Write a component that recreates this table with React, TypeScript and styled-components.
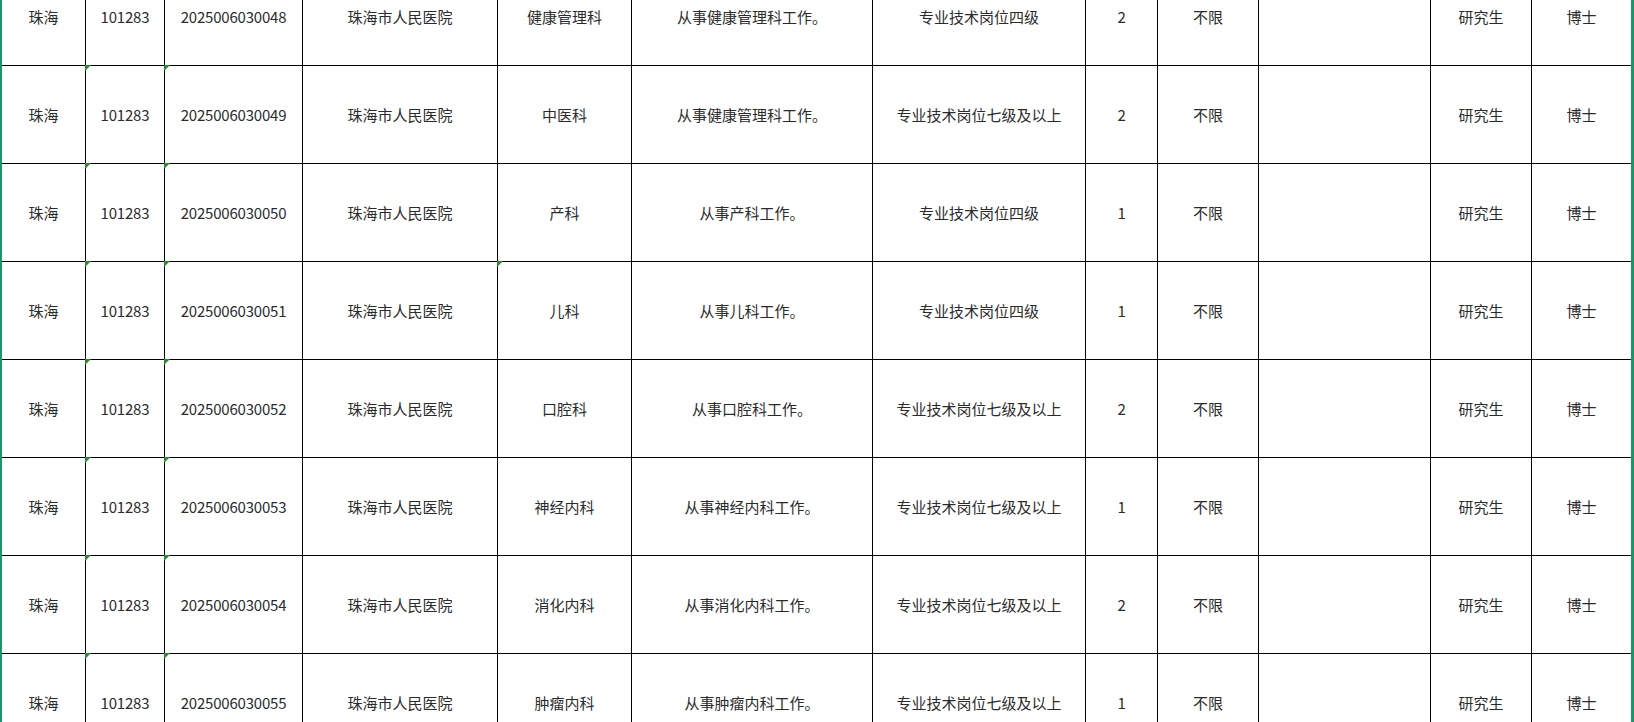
import * as React from 'react';
import styled, { createGlobalStyle } from 'styled-components';

type Row = {
    code: string;
    dept: string;
    duty: string;
    level: string;
    count: number;
    deptMark?: boolean;
};

const rows: Row[] = [
    { code: '2025006030048', dept: '健康管理科', duty: '从事健康管理科工作。', level: '专业技术岗位四级', count: 2 },
    { code: '2025006030049', dept: '中医科', duty: '从事健康管理科工作。', level: '专业技术岗位七级及以上', count: 2 },
    { code: '2025006030050', dept: '产科', duty: '从事产科工作。', level: '专业技术岗位四级', count: 1 },
    { code: '2025006030051', dept: '儿科', duty: '从事儿科工作。', level: '专业技术岗位四级', count: 1, deptMark: true },
    { code: '2025006030052', dept: '口腔科', duty: '从事口腔科工作。', level: '专业技术岗位七级及以上', count: 2 },
    { code: '2025006030053', dept: '神经内科', duty: '从事神经内科工作。', level: '专业技术岗位七级及以上', count: 1 },
    { code: '2025006030054', dept: '消化内科', duty: '从事消化内科工作。', level: '专业技术岗位七级及以上', count: 2 },
    { code: '2025006030055', dept: '肿瘤内科', duty: '从事肿瘤内科工作。', level: '专业技术岗位七级及以上', count: 1 },
];

// column widths include the 1px right grid line
const columns = [84, 79, 138, 195, 134, 241, 213, 72, 101, 172, 101, 99];

export default function App() {
    return (
        <>
            <GlobalStyle />
            <Page>
                <Edge $width={2} />
                <Sheet>
                    {rows.map((r, i) => (
                        <React.Fragment key={r.code}>
                            <Cell>珠海</Cell>
                            <Cell $mark={i > 0} $num>101283</Cell>
                            <Cell $mark={i > 0} $num>{r.code}</Cell>
                            <Cell>珠海市人民医院</Cell>
                            <Cell $mark={r.deptMark}>{r.dept}</Cell>
                            <Cell>{r.duty}</Cell>
                            <Cell>{r.level}</Cell>
                            <Cell $num>{r.count}</Cell>
                            <Cell>不限</Cell>
                            <Cell />
                            <Cell>研究生</Cell>
                            <Cell $last>博士</Cell>
                        </React.Fragment>
                    ))}
                </Sheet>
                <Edge $width={3} />
            </Page>
        </>
    );
}

const GlobalStyle = createGlobalStyle`
    html, body {
        margin: 0;
        padding: 0;
        background: #ffffff;
    }
    body {
        font-family: "Noto Sans CJK SC", "Noto Sans", sans-serif;
    }
`;

const Page = styled.div`
    display: flex;
    width: 1634px;
    height: 722px;
    overflow: hidden;
    background: #fff;
`;

const Edge = styled.div<{ $width: number }>`
    flex: 0 0 ${p => p.$width}px;
    background: #1f9468;
`;

const Sheet = styled.div`
    display: grid;
    grid-template-columns: ${columns.map(c => `${c}px`).join(' ')};
    grid-auto-rows: 98px;
    margin-top: -32px;
    align-self: flex-start;
`;

const Cell = styled.div<{ $mark?: boolean; $last?: boolean; $num?: boolean }>`
    position: relative;
    display: flex;
    align-items: center;
    justify-content: center;
    padding-bottom: 1px;
    box-sizing: border-box;
    border-bottom: 1px solid #000;
    border-right: ${p => (p.$last ? 'none' : '1px solid #000')};
    font-size: 15px;
    color: #2b2b2b;
    letter-spacing: ${p => (p.$num ? '-0.2px' : '0')};
    white-space: nowrap;

    &::before {
        content: '';
        display: ${p => (p.$mark ? 'block' : 'none')};
        position: absolute;
        left: -1px;
        top: -1px;
        width: 0;
        height: 0;
        border-top: 6px solid #2b8a2b;
        border-right: 6px solid transparent;
    }
`;
